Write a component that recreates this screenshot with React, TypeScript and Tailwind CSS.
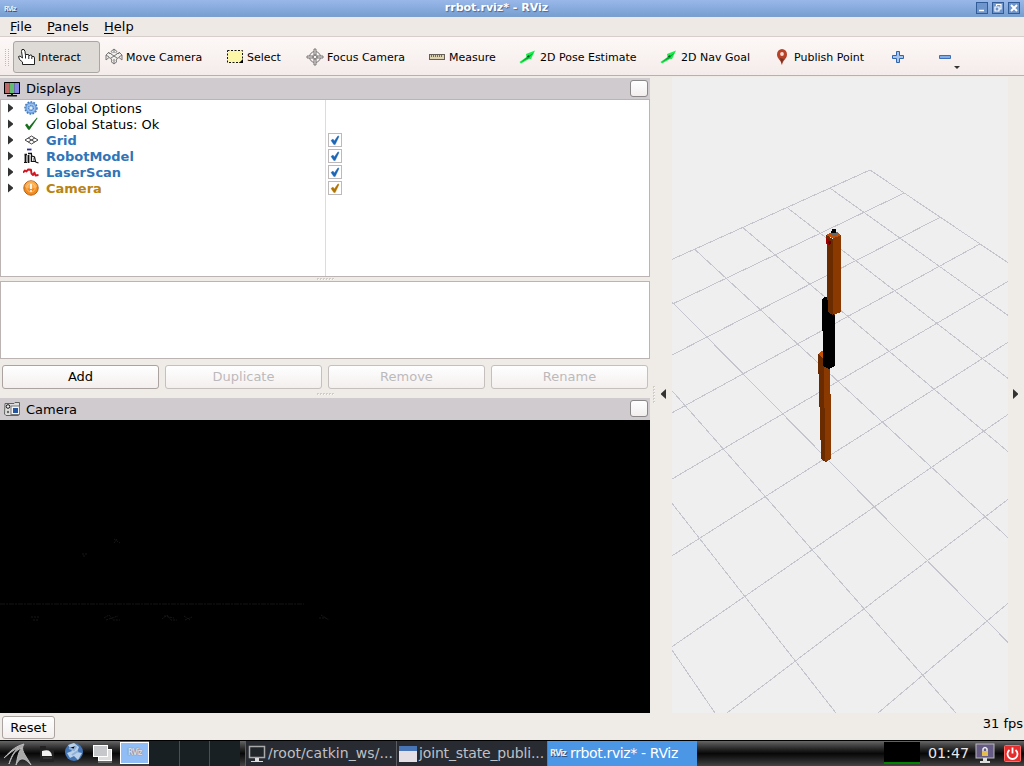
import type { ReactNode } from "react";

const gridLines: [number, number, number, number][] = [
  [870, 170, 672, 259.4],
  [903.8, 193.3, 672, 304.2],
  [940.3, 217.3, 672, 355],
  [980, 244, 672, 412.8],
  [1008, 281.4, 672, 479],
  [1008, 342.3, 672, 555.8],
  [1008, 414.4, 672, 646.7],
  [1008, 499.4, 727, 713],
  [1008, 603.3, 878, 713],
  [870, 170, 1008, 262.7],
  [830.3, 188.3, 1008, 315.4],
  [787.3, 207.7, 1008, 378.4],
  [743.3, 228, 1008, 451.7],
  [694.7, 249.3, 1008, 537.7],
  [672, 301.7, 1008, 642.4],
  [672, 390.7, 956, 713],
  [672, 503.3, 836, 713],
  [672, 650, 715, 713],
];

function Scene() {
  return (
    <svg viewBox="672 77 336 636" width="336" height="636" className="block" shapeRendering="crispEdges">
      <rect x="672" y="77" width="336" height="636" fill="#efefef" />
      <g stroke="#c5c5ce" strokeWidth="1">
        {gridLines.map((l, i) => (
          <line key={i} x1={l[0]} y1={l[1]} x2={l[2]} y2={l[3]} />
        ))}
      </g>
      <path d="M818 354L822 351L825 352V367L830 368V394L831 394V459L826 462L821 459V440L820 440V407L819 407V374H818Z" fill="#6b2b00" />
      <path d="M818 354L822 351L824 352V356L822 358Z" fill="#c65105" />
      <path d="M824 360H830V394H831V459L826 462L825 461V420L824 395Z" fill="#8a3a00" />
      <path d="M822 299L825 297H828V312H835V366L829 369L823 366V331H822Z" fill="#000" />
      <path d="M826 235L833 239V315L828 312V300L827 300V244H826Z" fill="#6b2b00" />
      <path d="M833 238L841 235V312L834 315L833 314Z" fill="#8a3a00" />
      <path d="M826 235L832 232H837L841 235L833 238.500Z" fill="#c65105" />
      <path d="M830 234L832 232H836L838 234L835 236H832Z" fill="#666" />
      <path d="M832 229H836V233H831V231H832Z" fill="#000" />
      <path d="M826 238L828 239L831 242V244L829 245L826 243Z" fill="#a00000" />
      <path d="M828 241H831V244L829 245Z" fill="#640000" />
    </svg>
  );
}

function HandIcon() {
  return (
    <svg width="18" height="18" viewBox="0 0 18 18" fill="#fff" stroke="#222" strokeWidth="1">
      <path d="M4.500 16.500V14L1.500 11.500L0.500 8.500L2 8L4.500 10L3.500 3.500L4 1.500H6L7 3.500L7.500 7.500L8 6.500H10.500L11 8L12 7H13.500L14 8.500L16 8.500L16.500 10V16.500Z" />
      <path d="M7.500 7.500V10.500M10.800 8V11M13.800 8.500V11" />
    </svg>
  );
}

function MoveCameraIcon() {
  return (
    <svg width="18" height="18" viewBox="0 0 18 18" fill="#f3efed" stroke="#777" strokeWidth="1">
      <path d="M6 5.500L7 4.500L6 3.500L9 1L12 3.500L11 4.500L12 5.500H14V4L17 7V12L14 9.500L12 10.500L11 13L12 13.500L9 16L6 13.500L7 13L6 10.500L4 9.500L1 12V7L4 4V5.500Z" />
      <path d="M6 6L12 10M12 6L6 10M1 7L4 9M17 7L14 9M9 1V5M9 11V16" />
    </svg>
  );
}

function SelectIcon() {
  return (
    <svg width="18" height="18" viewBox="0 0 18 18">
      <rect x="1.500" y="2.500" width="15" height="12" fill="#fbf6a8" stroke="#111" strokeDasharray="2 1.500" />
      <path d="M17 11V15H13Z" fill="#000" />
    </svg>
  );
}

function FocusIcon() {
  return (
    <svg width="18" height="18" viewBox="0 0 18 18" fill="none" stroke="#777">
      <circle cx="9" cy="9" r="5.500" />
      <circle cx="9" cy="9" r="2.500" />
      <path d="M8 1H10V6L9 8L8 6ZM8 17H10V12L9 10L8 12ZM1 8V10H6L8 9L6 8ZM17 8V10H12L10 9L12 8Z" fill="#eee9e7" />
    </svg>
  );
}

function MeasureIcon() {
  return (
    <svg width="18" height="18" viewBox="0 0 18 18">
      <rect x="1.500" y="6.500" width="15" height="5" fill="#ded3b0" stroke="#665f58" />
      <path d="M3.500 7V9M5.500 7V9M7.500 7V9M9.500 7V9M11.500 7V9M13.500 7V9" stroke="#766b55" />
    </svg>
  );
}

function ArrowIcon() {
  return (
    <svg width="18" height="18" viewBox="0 0 18 18">
      <path d="M16 2.500L7 6L7.500 9L0.500 14L2 15.500L10 11L12 11Z" fill="#19ef4a" />
      <path d="M1.500 14.500L9.500 10.300L15 4.500L8 9Z" fill="#0ba735" />
      <path d="M7.500 8.500L10.500 9.500L10 7Z" fill="#075422" />
    </svg>
  );
}

function PinIcon() {
  return (
    <svg width="18" height="18" viewBox="0 0 18 18">
      <path d="M9 17C8 12 4 10.500 4 6.500A5 5.500 0 0 1 14 6.500C14 10.500 10 12 9 17Z" fill="#b74228" />
      <path d="M9 17C8.500 12 12 11 13.500 8L11 11L7 10Z" fill="#6e352a" />
      <circle cx="9" cy="6" r="1.900" fill="#f7dcd5" />
    </svg>
  );
}

function GearIcon() {
  return (
    <svg width="16" height="16" viewBox="0 0 16 16">
      <circle cx="8" cy="8" r="6" fill="#9fc2ec" stroke="#3d77bd" strokeWidth="1.500" strokeDasharray="1.700 1.300" />
      <circle cx="8" cy="8" r="5" fill="#9fc2ec" stroke="#4c88cf" strokeWidth="0.800" />
      <circle cx="8" cy="8" r="2.600" fill="none" stroke="#3d77bd" strokeDasharray="1.500 0.700" />
      <circle cx="8" cy="8" r="1" fill="#fff" />
    </svg>
  );
}

function CheckIcon() {
  return (
    <svg width="16" height="16" viewBox="0 0 16 16">
      <path d="M2 9L4 7.500L6.200 10.500L14 1.500L14.500 2.200L6.700 13.800H5.200Z" fill="#17701d" />
    </svg>
  );
}

function GridIcon() {
  return (
    <svg width="16" height="16" viewBox="0 0 16 16" fill="none" stroke="#444">
      <path d="M2 8L8.500 4L15 8L8.500 12ZM5.200 6L11.800 10M11.800 6L5.200 10" />
    </svg>
  );
}

function RobotIcon() {
  return (
    <svg width="16" height="16" viewBox="0 0 16 16" fill="none" stroke="#111">
      <path d="M4 1.500H8.500" stroke="#30309a" strokeWidth="1.800" />
      <path d="M1.500 6.500H4M5 5.500H9" strokeWidth="1.600" />
      <path d="M2.500 7V14.500M5.500 7V15" strokeWidth="1.800" />
      <path d="M8.500 6V14M1 14.500H4M9 13.500H12.500L11.500 9L9 8M12.500 14L15.500 15" strokeWidth="1.200" />
      <path d="M7 8V14M4 10V13M10.500 10V13" stroke="#999" />
    </svg>
  );
}

function LaserIcon() {
  return (
    <svg width="16" height="16" viewBox="0 0 16 16" fill="none" stroke="#cf1620" strokeWidth="1.900" strokeLinejoin="round">
      <path d="M0 8.500L2 6.500L3.500 7.500L5 5.500L8 5.800L8.500 9.500L10 11L11.500 8.500L12.500 11.500L15.500 11" />
    </svg>
  );
}

function WarnIcon() {
  return (
    <svg width="16" height="16" viewBox="0 0 16 16">
      <circle cx="8" cy="8" r="7.200" fill="#f28b1d" stroke="#b86116" />
      <path d="M2 7A6 6 0 0 1 14 7Q8 10 2 7Z" fill="#fbad4e" />
      <circle cx="8" cy="7.800" r="4.200" fill="none" stroke="#fbd097" strokeWidth="0.700" />
      <path d="M8 4V9M8 10.200V11.700" stroke="#fff" strokeWidth="1.800" />
    </svg>
  );
}

function DisplaysIcon() {
  return (
    <svg width="16" height="16" viewBox="0 0 16 16">
      <rect x="0" y="1" width="16" height="12" rx="0.500" fill="#000" />
      <rect x="1" y="2" width="4.700" height="10" fill="#bd6767" />
      <rect x="5.700" y="2" width="4.600" height="10" fill="#63bd70" />
      <rect x="10.300" y="2" width="4.700" height="10" fill="#8585e2" />
      <path d="M7 12H9V14H13V15.500H3V14H7Z" fill="#111" />
    </svg>
  );
}

function CameraIcon() {
  return (
    <svg width="16" height="16" viewBox="0 0 16 16">
      <path d="M1 2.500H10L11 1.500H15.500V5L14.500 14.500H2L0.500 13Z" fill="#ddd" stroke="#60635f" />
      <circle cx="4" cy="5.500" r="1.800" fill="#eee" stroke="#111" />
      <circle cx="4" cy="11" r="1.200" fill="#666" />
      <rect x="7" y="5" width="8.500" height="8.500" fill="#f5f5f5" stroke="#777" />
      <rect x="9" y="7" width="5" height="5" fill="#2456a0" />
    </svg>
  );
}

function RVizLogo({ scale = 13, light = false }: { scale?: number; light?: boolean }) {
  return (
    <span
      className={`font-['DejaVu_Sans_Condensed'] font-bold leading-none tracking-[-1px] ${light ? "text-[#e6edf5] [text-shadow:1px_1px_0_#31537d]" : "text-[#d5dae8] [text-shadow:0_0_1px_#555]"}`}
      style={{ fontSize: scale }}
    >
      RViz
    </span>
  );
}

function Tool({ icon, label, width, pad = "pl-[6px]", active = false }: { icon: ReactNode; label: string; width: string; pad?: string; active?: boolean }) {
  return (
    <div className={`${width} ${pad} flex h-8 shrink-0 items-center whitespace-nowrap ${active ? "gap-[2px] rounded-[3px] border border-[#aaa6a3] bg-[#dedad6]" : "gap-[3px]"}`}>
      <span className="w-[18px] shrink-0">{icon}</span>
      <span className="mt-px">{label}</span>
    </div>
  );
}

function WinButton({ children }: { children: ReactNode }) {
  return (
    <div className="flex h-3 w-3 items-center justify-center border border-[#315c96] bg-[#6e95cc]">
      <svg width="10" height="10" viewBox="0 0 10 10" fill="none" stroke="#fff" strokeWidth="1.500">{children}</svg>
    </div>
  );
}

function PanelTitle({ icon, label, height, labelMargin }: { icon: ReactNode; label: string; height: string; labelMargin: string }) {
  return (
    <div className={`${height} flex shrink-0 items-center bg-[#cfcbcf] pr-[2px] pl-1`}>
      {icon}
      <span className={`${labelMargin} ml-[6px] flex-1`}>{label}</span>
      <span className="mb-px h-[17px] w-[18px] rounded-[3px] border border-[#8b8889] bg-linear-to-b from-white to-[#f2eeee]" />
    </div>
  );
}

const rows = [
  { label: "Global Options", icon: <GearIcon />, style: "", check: "" },
  { label: "Global Status: Ok", icon: <CheckIcon />, style: "", check: "" },
  { label: "Grid", icon: <GridIcon />, style: "font-bold text-[#2f75b7]", check: "#1d66b5" },
  { label: "RobotModel", icon: <RobotIcon />, style: "font-bold text-[#2f75b7]", check: "#1d66b5" },
  { label: "LaserScan", icon: <LaserIcon />, style: "font-bold text-[#2f75b7]", check: "#1d66b5" },
  { label: "Camera", icon: <WarnIcon />, style: "font-bold text-[#b98413]", check: "#b07300" },
];

function TreeRow({ row }: { row: (typeof rows)[number] }) {
  return (
    <div className="flex h-4 items-center">
      <svg className="ml-[7px] shrink-0" width="5" height="10" viewBox="0 0 5 10"><path d="M0 0.500L5 4.500V5.500L0 9.500Z" fill="#333" /></svg>
      <span className="ml-[10px] shrink-0">{row.icon}</span>
      <span className={`mt-[2px] ml-[7px] w-[280px] whitespace-nowrap leading-4 ${row.style}`}>{row.label}</span>
      {row.check && (
        <span className="ml-[2px] flex h-[14px] w-[14px] items-center justify-center border border-[#bdb9b9] bg-white">
          <svg width="12" height="12" viewBox="0 0 12 12"><path d="M2 6.500L4 5L5.300 7L9 1.800L10 2.500L6.200 10.500H4.800Z" fill={row.check} stroke={row.check} strokeWidth="0.400" /></svg>
        </span>
      )}
    </div>
  );
}

function Dots({ vertical = false }: { vertical?: boolean }) {
  return (
    <span className={`flex gap-px ${vertical ? "flex-col" : ""}`}>
      {[0, 1, 2, 3, 4, 5].map((i) => (
        <span key={i} className="h-[2px] w-[2px] shrink-0 border-t border-l border-[#d0ccc8] bg-[#faf9f7]" />
      ))}
    </span>
  );
}

function CameraView() {
  return (
    <svg className="block bg-black" width="650" height="293" viewBox="0 420 650 293" fill="none" stroke="#171717">
      <path d="M0 604H304" stroke="#151515" strokeDasharray="5 1 2 1" />
      <path d="M114 539L120 543M117 539L114 543M82 554H87M83 556H86M31 617H40M33 620H38M104 618L109 615L113 620H120M106 620L118 616M162 619L167 615L171 620H177M164 616L174 618M184 616L190 620M185 620L192 617M321 615L329 620M319 618H326" strokeDasharray="2 1" />
    </svg>
  );
}

function Task({ icon, label, width, style }: { icon: ReactNode; label: string; width: string; style: string }) {
  return (
    <div className={`${width} ${style} flex h-full shrink-0 items-center gap-px border-l whitespace-nowrap`}>
      {icon}
      <span className="mb-px">{label}</span>
    </div>
  );
}

export default function App() {
  return (
    <div className="flex h-[766px] w-[1024px] flex-col overflow-hidden bg-[#efebe7] font-['DejaVu_Sans',sans-serif] text-[13px] leading-none text-black">
      <header className="flex h-[17px] shrink-0 items-center border-b border-[#7b9fce] bg-linear-to-b from-[#99b8e9] to-[#789fd1]">
        <div className="mb-[3px] w-[60px] pl-1 leading-none"><RVizLogo scale={7} light /></div>
        <div className="mb-px flex-1 pr-[57px] pl-[14px] text-center text-[11px] leading-none font-bold text-white [text-shadow:1px_1px_1px_#416a9e]">rrbot.rviz* - RViz</div>
        <div className="flex w-[48px] gap-1">
          <WinButton><path d="M2 7.500H7" /></WinButton>
          <WinButton><path d="M3.500 3V1.500H8V6H6.500M2 4H6V8H2Z" strokeWidth="1.200" /></WinButton>
          <WinButton><path d="M2 2L8 8M8 2L2 8" strokeWidth="2" /></WinButton>
        </div>
      </header>

      <nav className="flex h-[20px] shrink-0 items-center border-b border-[#d5cecb] bg-[#efe9e6] pl-[10px]">
        <span className="w-[37px]"><u className="underline-offset-2">F</u>ile</span>
        <span className="w-[57px]"><u className="underline-offset-2">P</u>anels</span>
        <span><u className="underline-offset-2">H</u>elp</span>
      </nav>

      <div className="flex h-[39px] shrink-0 items-center border-b border-[#b7b0ae] bg-linear-to-b from-[#fdf8f7] to-[#f4ecea] pt-[2px] text-[11px]">
        <span className="ml-[5px] flex w-[7px] gap-[2px]">
          <span className="h-[17px] w-px border-l border-dotted border-[#bbb]" />
          <span className="h-[17px] w-px border-l border-dotted border-[#bbb]" />
        </span>
        <Tool icon={<HandIcon />} label="Interact" width="ml-px w-[87px]" pad="pl-[4px]" active />
        <Tool icon={<MoveCameraIcon />} label="Move Camera" width="w-[120px]" pad="pl-[5px]" />
        <Tool icon={<SelectIcon />} label="Select" width="w-[80px]" />
        <Tool icon={<FocusIcon />} label="Focus Camera" width="w-[122px]" />
        <Tool icon={<MeasureIcon />} label="Measure" width="w-[91px]" />
        <Tool icon={<ArrowIcon />} label="2D Pose Estimate" width="w-[141px]" />
        <Tool icon={<ArrowIcon />} label="2D Nav Goal" width="w-[113px]" />
        <Tool icon={<PinIcon />} label="Publish Point" width="w-[118px]" />
        <svg className="ml-[6px] shrink-0" width="14" height="14" viewBox="0 0 14 14"><path d="M5.500 1.500H8.500V5.500H12.500V8.500H8.500V12.500H5.500V8.500H1.500V5.500H5.500Z" fill="#a5c5ec" stroke="#3264ab" /></svg>
        <svg className="ml-[33px] shrink-0" width="24" height="24" viewBox="0 0 24 24"><path d="M1.500 10.500H12.500V13.500H1.500Z" fill="#82ace3" stroke="#3c6fb8" /><path d="M16 21H22L19 24Z" fill="#333" /></svg>
      </div>

      <main className="flex h-[637px] shrink-0 pt-px">
        <section className="flex w-[650px] shrink-0 flex-col pt-px">
          <PanelTitle height="h-[21px]" labelMargin="mb-px" icon={<DisplaysIcon />} label="Displays" />
          <div className="h-[178px] shrink-0 border border-[#bcb4b3] bg-white bg-[linear-gradient(to_right,transparent_324px,#dcdcdc_324px,#dcdcdc_325px,transparent_325px)]">
            {rows.map((row) => <TreeRow key={row.label} row={row} />)}
          </div>
          <div className="flex h-1 shrink-0 items-center justify-center"><Dots /></div>
          <div className="h-[78px] shrink-0 border border-[#bcb4b3] bg-white" />
          <div className="mt-[6px] flex h-6 shrink-0 gap-[6px] px-[2px]">
            {["Add", "Duplicate", "Remove", "Rename"].map((label, i) => (
              <button key={label} className={`w-[157px] rounded-[3px] border bg-linear-to-b from-white to-[#f3efee] pb-[2px] text-center ${i ? "border-[#c5bfbd] text-[#bdb9bb]" : "border-[#aaa3a0]"}`}>{label}</button>
            ))}
          </div>
          <div className="flex h-[9px] shrink-0 items-center justify-center"><Dots /></div>
          <PanelTitle height="h-[22px]" labelMargin="mt-px" icon={<CameraIcon />} label="Camera" />
          <CameraView />
        </section>
        <div className="flex w-[22px] shrink-0 items-center pb-[2px]">
          <span className="ml-[3px]"><Dots vertical /></span>
          <svg className="ml-[5px]" width="6" height="10" viewBox="0 0 6 10"><path d="M6 0V10L1 5.500V4.500Z" fill="#333" /></svg>
        </div>
        <Scene />
        <div className="flex flex-1 items-center pb-[2px] pl-[5px]">
          <svg width="6" height="10" viewBox="0 0 6 10"><path d="M0 0V10L5 5.500V4.500Z" fill="#333" /></svg>
        </div>
      </main>

      <div className="flex h-[27px] shrink-0 items-start justify-between pt-[3px] pl-[2px]">
        <button className="h-[23px] w-[53px] rounded-[3px] border border-[#aaa3a0] bg-linear-to-b from-white to-[#f3efee]">Reset</button>
        <span className="pt-px pr-px">31 fps</span>
      </div>

      <footer className="flex h-[26px] shrink-0 items-stretch border-t border-black bg-linear-to-b from-[#666] via-[#080808] to-[#444] text-[14px]">
        <div className="flex w-[120px] shrink-0 items-center">
          <svg width="34" height="25" viewBox="0 0 34 25" fill="none" stroke="#bbb"><path d="M4 17C12 8 17 5 24 3C20 9 25 13 31 24C25 17 20 15 16 24C18 15 18 11 22 7C16 9 13 12 9 23C12 13 15 10 18 7C13 9 10 12 4 17Z" fill="#aaa" /></svg>
          <svg className="ml-[5px]" width="16" height="25" viewBox="0 0 16 25"><path d="M1 5H7V8H15V21H1Z" fill="#222" /><path d="M3 10Q12 7 13 15H3Z" fill="#f3f3f3" /><path d="M4 17H13" stroke="#444" /></svg>
          <svg className="ml-[9px]" width="20" height="25" viewBox="0 0 20 25"><circle cx="10" cy="11" r="9" fill="#4476b5" /><path d="M4 4L10 2L15 6L13 11L18 12L14 19L10 15L6 17L3 12L8 10Z" fill="#bad0e8" /><path d="M5 7L10 9L12 5M8 14L14 10" stroke="#8fb0d8" strokeWidth="2" /></svg>
          <svg className="ml-2" width="21" height="25" viewBox="0 0 21 25"><rect x="6.500" y="8.500" width="13" height="11" fill="#ddd" stroke="#fff" /><rect x="1.500" y="4.500" width="14" height="11" fill="#c5c7ca" stroke="#fff" /><path d="M6 21H20" stroke="#aaa" /></svg>
        </div>
        <div className="mt-px mb-[2px] flex w-[29px] shrink-0 items-center justify-center border border-white bg-[#90bdf6]"><RVizLogo scale={8} /></div>
        <div className="w-[31px] shrink-0 border-r border-[#465154] bg-[#192023]" />
        <div className="w-[30px] shrink-0 border-r border-[#465154] bg-[#192023]" />
        <div className="w-[30px] shrink-0 bg-[#192023]" />
        <div className="w-[5px] shrink-0" />
        <Task style="border-[#5b5d62] bg-[#292b33] tracking-[0.05px] text-[#bfc1c5]" width="w-[151px]" label="/root/catkin_ws/..." icon={<svg className="ml-[2px] shrink-0" width="19" height="20" viewBox="0 0 19 20"><rect x="1.500" y="2.500" width="15" height="11" fill="#20262a" stroke="#aaa" strokeWidth="1.500" /><path d="M7 14H11V17H15V18H3V17H7Z" fill="#ddd" /></svg>} />
        <Task style="border-[#5b5d62] bg-[#292b33] tracking-[-0.15px] text-[#bfc1c5]" width="w-[151px]" label="joint_state_publi..." icon={<span className="ml-[2px] mr-px h-4 w-[18px] shrink-0 border-t-[5px] border-[#4775b5] bg-[#e3dfe4]" />} />
        <Task style="border-[#777] bg-[#4c96e6] tracking-[-0.36px] text-white" width="w-[150px]" label="rrbot.rviz* - RViz" icon={<span className="ml-[2px] flex w-[19px] shrink-0 overflow-hidden"><RVizLogo scale={9} light /></span>} />
        <div className="flex-1" />
        <div className="mt-px h-[22px] w-9 shrink-0 border-b-2 border-[#008400] bg-black" />
        <div className="flex w-[53px] shrink-0 items-center justify-center pb-px pl-[4px] text-[14.3px] text-[#e8e8e8]">01:47</div>
        <svg className="mt-[2px] ml-[2px] shrink-0" width="20" height="22" viewBox="0 0 20 22"><rect x="1" y="1" width="18" height="14" fill="#655b85" stroke="#bbb" /><path d="M8 15H12V18H15V20H5V18H8Z" fill="#ddd" /><path d="M8 8V6Q10 3 12 6V8" fill="none" stroke="#eee" strokeWidth="1.500" /><rect x="7" y="8" width="6" height="5" fill="#e4bd50" /></svg>
        <svg className="mt-1 mr-[3px] ml-[9px] shrink-0" width="17" height="17" viewBox="0 0 17 17"><rect x="0.500" y="0.500" width="16" height="16" rx="1" fill="#e42d2d" stroke="#ff6a64" /><path d="M5.500 5A5 5 0 1 0 11.500 5M8.500 2.500V8.500" fill="none" stroke="#fff" strokeWidth="1.800" /></svg>
      </footer>
    </div>
  );
}
